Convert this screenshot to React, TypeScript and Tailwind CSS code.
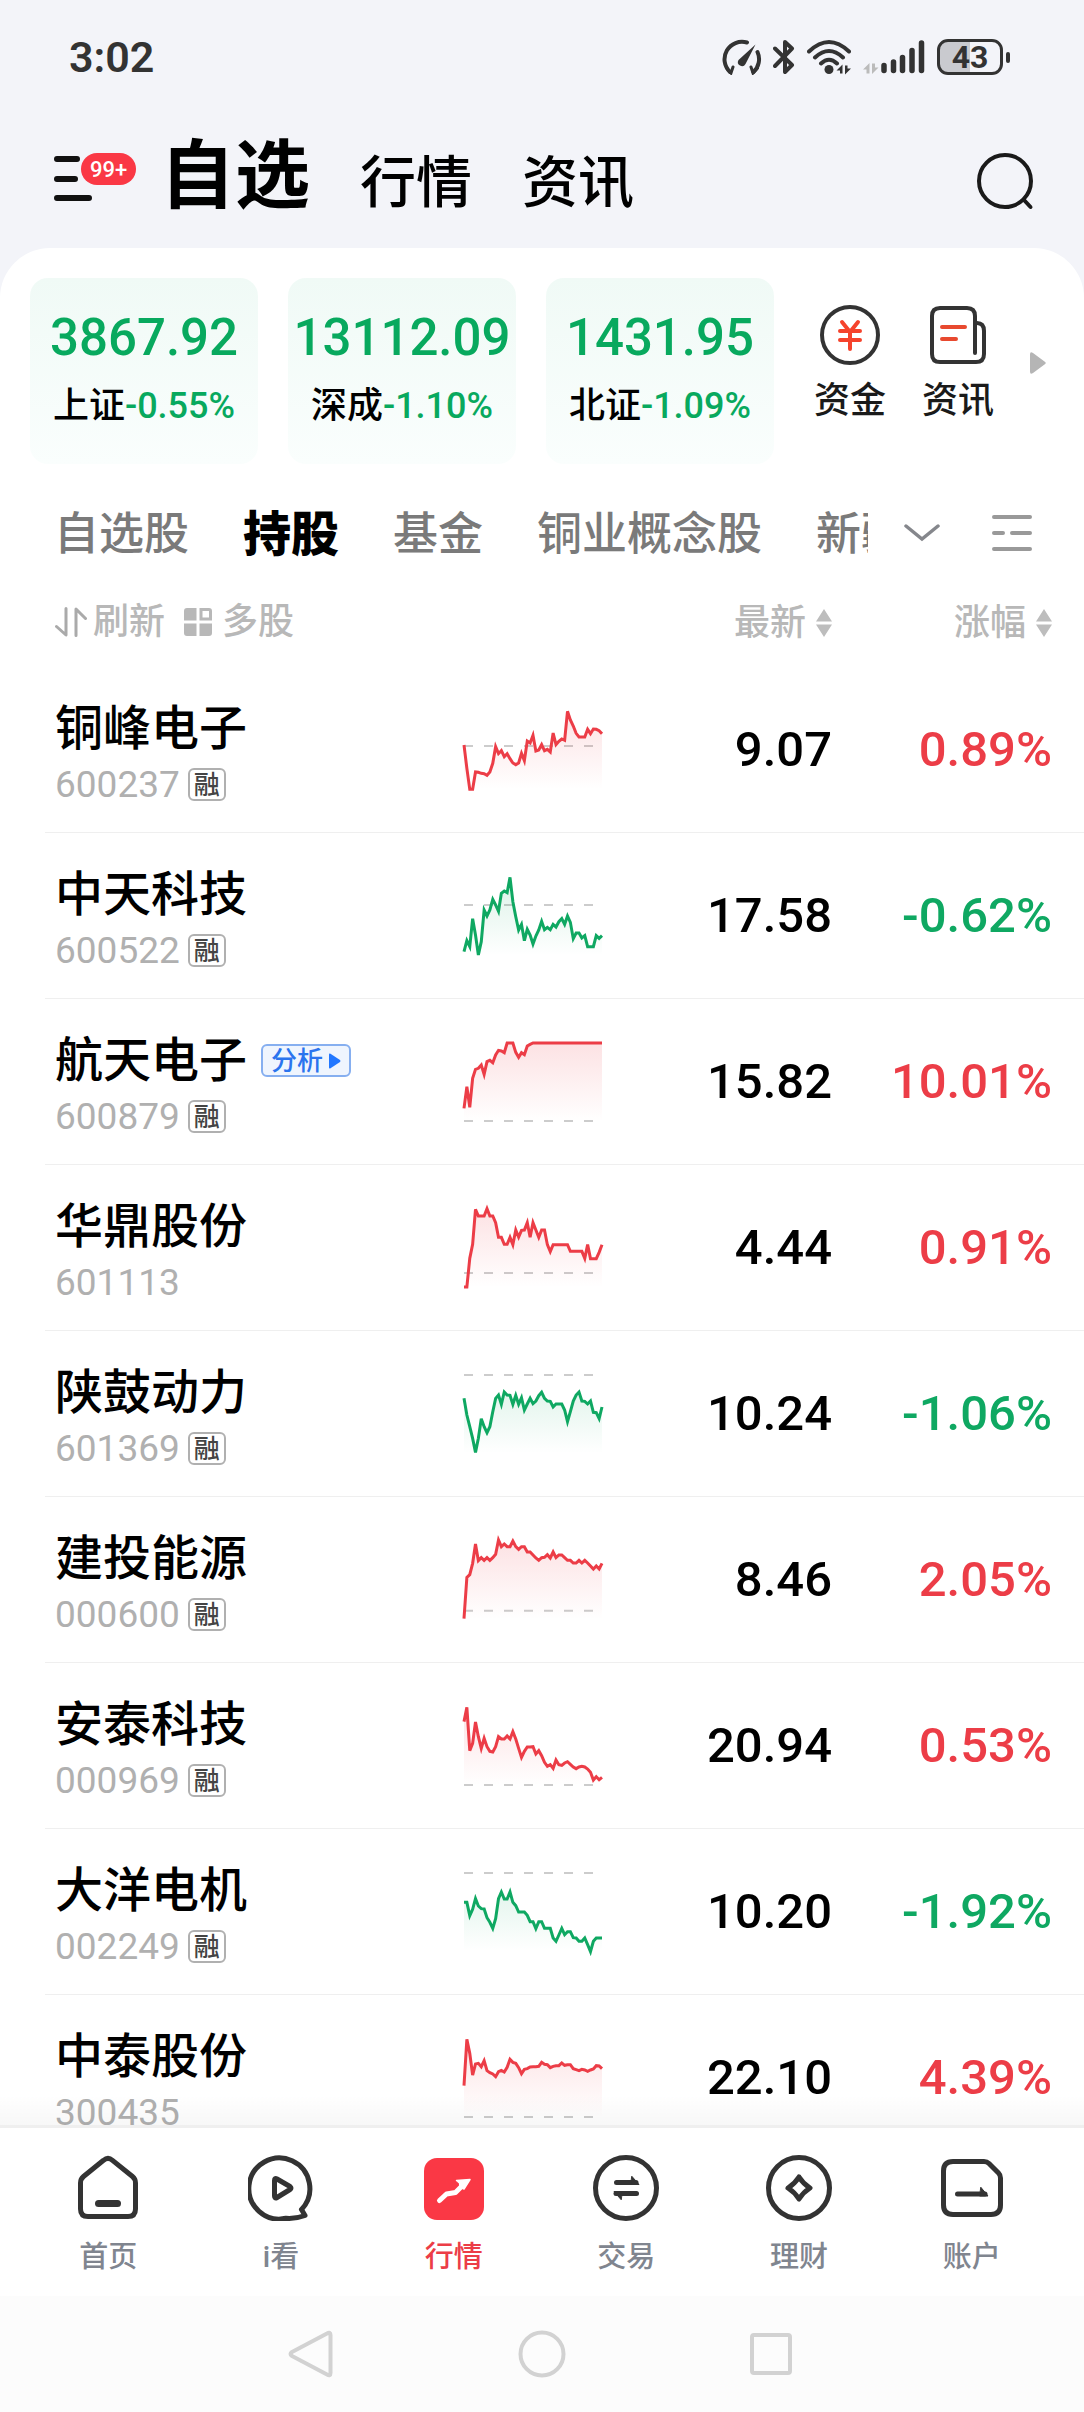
import type { ReactNode } from "react";
import clsx from "clsx";

type Stock = {
  name: string;
  code: string;
  margin?: boolean;
  analysis?: boolean;
  price: string;
  change: string;
  // y of yesterday's close, then the minute line, both on a 264 high grid
  base: number;
  trend: number[];
};

const indexes = [
  { name: "上证", value: "3867.92", change: "-0.55%" },
  { name: "深成", value: "13112.09", change: "-1.10%" },
  { name: "北证", value: "1431.95", change: "-1.09%" },
];

const groups = ["自选股", "持股", "基金", "铜业概念股", "新疆"];

const stocks: Stock[] = [
  {
    name: "铜峰电子",
    code: "600237",
    margin: true,
    price: "9.07",
    change: "0.89%",
    base: 120,
    trend: [117, 187, 250, 250, 198, 199, 202, 203, 208, 198, 172, 122, 143, 134, 152, 143, 158, 171, 176, 171, 142, 164, 105, 111, 88, 135, 132, 116, 134, 130, 138, 81, 116, 106, 99, 103, 16, 42, 60, 82, 93, 93, 93, 70, 83, 69, 70, 74, 83],
  },
  {
    name: "中天科技",
    code: "600522",
    margin: true,
    price: "17.58",
    change: "-0.62%",
    base: 99,
    trend: [239, 206, 224, 140, 189, 249, 209, 114, 132, 114, 82, 99, 118, 64, 57, 62, 16, 89, 134, 174, 157, 206, 172, 189, 216, 192, 174, 148, 173, 166, 173, 157, 165, 149, 140, 157, 132, 151, 200, 183, 183, 198, 191, 224, 224, 224, 191, 199, 191],
  },
  {
    name: "航天电子",
    code: "600879",
    margin: true,
    analysis: true,
    price: "15.82",
    change: "10.01%",
    base: 249,
    trend: [211, 146, 208, 121, 94, 91, 81, 109, 71, 67, 74, 51, 37, 39, 44, 15, 15, 15, 43, 58, 44, 50, 24, 19, 15, 15, 15, 15, 15, 15, 15, 15, 15, 15, 15, 15, 15, 15, 15, 15, 15, 15, 15, 15, 15, 15, 15, 15, 15],
  },
  {
    name: "华鼎股份",
    code: "601113",
    price: "4.44",
    change: "0.91%",
    base: 207,
    trend: [249, 249, 163, 121, 16, 36, 36, 36, 14, 36, 36, 56, 100, 100, 121, 121, 100, 122, 78, 99, 79, 78, 56, 100, 56, 78, 100, 78, 78, 122, 143, 122, 122, 122, 122, 122, 122, 142, 142, 142, 142, 142, 163, 122, 164, 164, 164, 145, 122],
  },
  {
    name: "陕鼓动力",
    code: "601369",
    margin: true,
    price: "10.24",
    change: "-1.06%",
    base: 15,
    trend: [85, 135, 170, 205, 247, 205, 146, 170, 188, 170, 125, 85, 75, 103, 66, 75, 76, 103, 76, 103, 83, 120, 102, 85, 101, 93, 77, 67, 85, 93, 94, 111, 102, 102, 102, 120, 155, 125, 93, 75, 66, 93, 94, 102, 93, 127, 128, 146, 111],
  },
  {
    name: "建投能源",
    code: "000600",
    margin: true,
    price: "8.46",
    change: "2.05%",
    base: 224,
    trend: [248, 124, 116, 82, 24, 74, 65, 73, 65, 73, 65, 55, 12, 32, 24, 32, 32, 15, 32, 40, 32, 32, 48, 48, 57, 66, 73, 65, 64, 56, 66, 48, 65, 57, 57, 65, 73, 73, 81, 81, 73, 81, 73, 81, 90, 99, 90, 99, 82],
  },
  {
    name: "安泰科技",
    code: "000969",
    margin: true,
    price: "20.94",
    change: "0.53%",
    base: 249,
    trend: [59, 16, 146, 124, 60, 104, 139, 109, 134, 148, 150, 134, 104, 111, 111, 102, 111, 89, 111, 139, 166, 148, 135, 135, 134, 156, 146, 161, 181, 193, 188, 199, 174, 188, 190, 183, 179, 187, 195, 200, 195, 193, 195, 201, 211, 234, 224, 233, 226],
  },
  {
    name: "大洋电机",
    code: "002249",
    margin: true,
    price: "10.20",
    change: "-1.92%",
    base: 15,
    trend: [103, 103, 143, 124, 92, 114, 122, 123, 149, 163, 181, 152, 92, 72, 93, 93, 72, 103, 113, 132, 132, 132, 142, 161, 161, 182, 161, 161, 181, 181, 181, 210, 220, 201, 181, 200, 191, 191, 209, 210, 220, 220, 210, 230, 251, 220, 210, 210, 210],
  },
  {
    name: "中泰股份",
    code: "300435",
    price: "22.10",
    change: "4.39%",
    base: 249,
    trend: [155, 16, 58, 123, 90, 88, 98, 80, 110, 116, 120, 128, 113, 109, 114, 100, 76, 85, 88, 101, 119, 106, 104, 99, 98, 98, 97, 85, 91, 92, 101, 97, 95, 95, 87, 94, 92, 92, 104, 107, 110, 106, 108, 112, 108, 105, 95, 96, 104],
  },
];

const navItems: { label: string; icon: ReactNode; active?: boolean }[] = [
  {
    label: "首页",
    icon: (
      <>
        <path d="M28.5 5.3Q33 1.5 37.5 5.3L57.5 21.5Q60.5 24 60.5 28V54Q60.5 61.5 53 61.5H13Q5.5 61.5 5.5 54V28Q5.5 24 8.5 21.5Z" />
        <path d="M23.5 48.5H42.5" strokeWidth="7" />
      </>
    ),
  },
  {
    label: "i看",
    icon: (
      <>
        <path d="M53.5 54.5A30.5 30.5 0 1 0 38 63.3C45 63.8 51 62.8 57 60.5L53.5 54.5" />
        <path d="M26.5 25.5Q26.5 22.5 29 24L42 31.5Q44 33 42 34.5L29 42.5Q26.5 44 26.5 41Z" />
      </>
    ),
  },
  {
    label: "行情",
    active: true,
    icon: (
      <>
        <rect x="3" y="3" width="60" height="62" rx="13" fill="#fa3845" stroke="none" />
        <path d="M18.5 45.5L25.5 39L34.5 37.5L42 30" stroke="#fff" strokeWidth="5" />
        <path d="M35.5 25.5L49 24.5L43 34L39 32L38.5 28Z" fill="#fff" stroke="#fff" strokeWidth="1.5" />
      </>
    ),
  },
  {
    label: "交易",
    icon: (
      <>
        <circle cx="33" cy="33" r="30.5" />
        <path d="M23.5 27.5H43" />
        <path d="M39 21.5L46 29.5H38Z" fill="#333" strokeWidth="1" />
        <path d="M23 38.5H43.5" />
        <path d="M28 44.5L21 36.5H29Z" fill="#333" strokeWidth="1" />
      </>
    ),
  },
  {
    label: "理财",
    icon: (
      <>
        <circle cx="33" cy="33" r="30.5" />
        <path d="M33 22Q37 28.5 44 33Q37 37.5 33 44Q29 37.5 22 33Q29 28.5 33 22Z" />
      </>
    ),
  },
  {
    label: "账户",
    icon: (
      <>
        <path d="M14 6.5H45Q48 6.5 50 8.5L59.5 18Q61.5 20 61.5 23V50Q61.5 59.5 52 59.5H14Q4.5 59.5 4.5 50V16Q4.5 6.5 14 6.5Z" />
        <path d="M18.5 39H46" />
        <path d="M42 32.5L49 41H41Z" fill="#333" strokeWidth="1" />
      </>
    ),
  },
];

const StatusBar = () => (
  <div className="flex h-[114px] shrink-0 items-center justify-between pl-[69px] pr-[74px] text-[#333]">
    <span className="text-[43px] font-semibold leading-none">3:02</span>
    <div className="flex items-center">
      {/* Speed */}
      <svg viewBox="0 0 40 36" className="h-9 w-10" fill="none" stroke="currentColor" strokeWidth="4" strokeLinecap="round">
        <path d="M8 33A17.5 17.5 0 0 1 25 3.5M35.5 13A17.5 17.5 0 0 1 31.5 33" />
        <path d="M4.5 29L9 34L11 28M35.5 29L31 34L29 28" strokeWidth="3" />
        <path d="M33.5 5.5L23.5 25A4 4 0 1 1 16.5 21Z" fill="currentColor" stroke="none" />
      </svg>
      {/* Bluetooth */}
      <svg viewBox="0 0 22 36" className="ml-[11px] h-9 w-[22px]" fill="none" stroke="currentColor" strokeWidth="4" strokeLinecap="round" strokeLinejoin="round">
        <path d="M2 9.5L19 26L12 33V3L19 9.5L2 27" />
      </svg>
      {/* Wifi */}
      <svg viewBox="0 0 44 36" className="ml-3 h-9 w-11" fill="none" stroke="currentColor" strokeWidth="4" strokeLinecap="round">
        <path d="M2 12.5Q22 -6.5 42 12.5M8 18.5Q22 5.5 36 18.5M14 24.5Q22 17 30 24.5" />
        <circle cx="22" cy="30.5" r="4.5" fill="currentColor" stroke="none" />
        <path d="M29.5 31.5L35.5 25.5V34.5H33V31.5ZM44 29.5L38 35.5V26.5H40.5V29.5Z" fill="currentColor" stroke="none" />
      </svg>
      {/* Signal */}
      <svg viewBox="0 0 62 36" className="ml-3 h-9 w-[62px]" fill="none" strokeLinecap="round">
        <path d="M0 30.5L6.5 24V34.5H3.5V30.5ZM15.500 28.5L9 35V24.5H12V28.5Z" fill="#bbb" />
        <path d="M21 26.5V31.5M30.5 23V31.5M39.5 18.5V31.5M49 11.5V31.5M58.5 4V31.5" stroke="currentColor" strokeWidth="5.5" />
      </svg>
      {/* Battery */}
      <div className="ml-3 flex h-9 w-[66px] items-center justify-center rounded-[11px] border-3 border-[#333] bg-linear-to-r from-[#c9cacf] from-50% to-transparent to-50%">
        <span className="text-[32px] font-bold leading-none">43</span>
      </div>
      <span className="ml-[3px] h-[11px] w-1 rounded-full bg-[#333]" />
    </div>
  </div>
);

const Header = () => (
  <header className="flex h-[134px] shrink-0 items-center pb-1 pl-[54px] pr-[50px]">
    <button aria-label="菜单" className="relative h-[50px] w-[82px]">
      <svg viewBox="0 0 82 50" className="h-full w-full" stroke="#111" strokeWidth="6" strokeLinecap="round">
        <path d="M3 5H23M3 25H21M3 44H35" />
      </svg>
      <span className="absolute -top-px right-0 flex h-8 w-[55px] items-center justify-center rounded-full bg-[#fa3845] text-[22px] font-medium text-white">
        99+
      </span>
    </button>
    <nav className="ml-6 flex items-baseline gap-[50px] text-[56px] font-medium leading-[90px] text-black">
      <a href="#watch" className="text-[75px] font-bold">自选</a>
      <a href="#market">行情</a>
      <a href="#news">资讯</a>
    </nav>
    <button aria-label="搜索" className="ml-auto pt-1">
      <svg viewBox="0 0 58 58" className="h-[58px] w-[58px]" fill="none" stroke="#1a1a1a" strokeWidth="4" strokeLinecap="round">
        <circle cx="29" cy="29" r="26" />
        <path d="M48 48L54.5 55" />
      </svg>
    </button>
  </header>
);

const MarketStrip = () => (
  <section className="flex items-center pb-[25px] pl-[30px] pr-[38px] pt-[30px]">
    <div className="flex flex-1 gap-[30px]">
      {indexes.map((item) => (
        <button
          key={item.name}
          className="flex h-[186px] min-w-0 flex-1 flex-col items-center rounded-[18px] bg-linear-to-b from-[#f0faf6] to-[#fafefd] pt-8"
        >
          <span className="text-[51px] font-medium leading-[56px] text-[#08a95e]">{item.value}</span>
          <span className="mt-5 whitespace-nowrap text-[36px] font-medium leading-10 text-black">
            {item.name}
            <span className="text-[#08a95e]">{item.change}</span>
          </span>
        </button>
      ))}
    </div>
    <div className="ml-10 flex items-center gap-9 pb-4 text-[36px] font-medium leading-10 text-[#1a1a1a]">
      <button className="flex flex-col items-center gap-4">
        <svg viewBox="0 0 60 60" className="h-[60px] w-[60px]" fill="none" strokeLinecap="round">
          <circle cx="30" cy="30" r="28" stroke="#333" strokeWidth="4" />
          <path d="M22 17L30 27L38 17M20 26H40M20 35H40M30 27V44" stroke="#f5432c" strokeWidth="4" />
        </svg>
        资金
      </button>
      <button className="flex flex-col items-center gap-4">
        <svg viewBox="0 0 60 60" className="h-[60px] w-[60px]" fill="none" strokeLinecap="round" strokeWidth="4">
          <path d="M47 48V11Q47 3 39 3H12Q4 3 4 11V49Q4 57 12 57H48Q56 57 56 49V26Q56 18 49 18" stroke="#333" />
          <path d="M14 22H37M14 34H28" stroke="#e8492f" />
        </svg>
        资讯
      </button>
      <button aria-label="更多">
        <svg viewBox="0 0 16 22" className="h-[22px] w-4" fill="#b5b5b5">
          <path d="M0 2.5Q0 -1 3 1L14.5 9.5Q17 11 14.5 12.5L3 21Q0 23 0 19.5Z" />
        </svg>
      </button>
    </div>
  </section>
);

const GroupTabs = () => (
  <div className="flex h-[88px] items-center pl-[54px] pr-[52px]">
    <div className="flex min-w-0 flex-1 items-center gap-[54px] overflow-hidden whitespace-nowrap pt-1 text-[45px] font-medium leading-[60px] text-[#7a7a7a]">
      {groups.map((group) => (
        <button key={group} className={clsx("shrink-0", group === "持股" && "text-[48px] font-black text-black")}>
          {group}
        </button>
      ))}
    </div>
    <button aria-label="展开分组" className="ml-9">
      <svg viewBox="0 0 36 18" className="h-[18px] w-9" fill="none" stroke="#85878c" strokeWidth="3.5" strokeLinecap="round">
        <path d="M2 2L18 15L34 2" />
      </svg>
    </button>
    <button aria-label="管理分组" className="ml-[52px]">
      <svg viewBox="0 0 40 36" className="h-9 w-10" stroke="#999" strokeWidth="4" strokeLinecap="round">
        <path d="M2 2H38M2 18H11M20 18H38M2 34H38" />
      </svg>
    </button>
  </div>
);

const SortButton = ({ label }: { label: string }) => (
  <button className="inline-flex items-center gap-[10px] align-middle">
    {label}
    <svg viewBox="0 0 16 28" className="h-7 w-4" fill="#bdbdbd">
      <path d="M8 0L16 12.5H0ZM8 28L16 15.5H0Z" />
    </svg>
  </button>
);

const Sparkline = ({ stock, up }: { stock: Stock; up: boolean }) => {
  const color = up ? "#ec3d47" : "#0fa862";
  const step = 414 / (stock.trend.length - 1);
  const line = stock.trend.map((y, i) => `${(i * step).toFixed(1)},${y}`).join(" ");
  const fill = `fill-${stock.code}`;

  return (
    <svg viewBox="0 0 414 264" className="block h-[88px] w-[138px] overflow-visible" fill="none">
      <defs>
        <linearGradient id={fill} x1="0" y1="0" x2="0" y2="250" gradientUnits="userSpaceOnUse">
          <stop offset="0" stopColor={color} stopOpacity="0.16" />
          <stop offset="1" stopColor={color} stopOpacity="0" />
        </linearGradient>
      </defs>
      <path d={`M0 ${stock.base}H414`} stroke="#ccc" strokeWidth="6" strokeDasharray="27 33" />
      <polygon points={`0,250 ${line} 414,250`} fill={`url(#${fill})`} />
      <polyline points={line} stroke={color} strokeWidth="9" />
    </svg>
  );
};

const StockRow = ({ stock }: { stock: Stock }) => {
  const up = !stock.change.startsWith("-");

  return (
    <tr className="*:h-[166px] *:border-b *:border-[#efefef] *:p-0">
      <td>
        <div className="pl-[10px] pt-[6px]">
          <div className="flex items-center gap-[14px]">
            <span className="text-[48px] font-medium leading-[56px] text-black">{stock.name}</span>
            {stock.analysis && (
              <button className="flex h-[33px] items-center gap-[6px] rounded-md border-2 border-[#86aff0] bg-[#eff5fe] px-2 text-[26px] font-medium leading-none text-[#2b74ee]">
                分析
                <svg viewBox="0 0 12 16" className="h-4 w-3" fill="#2277ff">
                  <path d="M0 1.5Q0 0 1.5 .7L11 7Q12 8 11 9L1.5 15.3Q0 16 0 14.5Z" />
                </svg>
              </button>
            )}
          </div>
          <div className="mt-2 flex items-center gap-2">
            <span className="text-[37px] leading-10 text-[#b0b0b0]">{stock.code}</span>
            {stock.margin && (
              <span className="flex h-[33px] w-[38px] items-center justify-center rounded-md border-2 border-[#b0b0b0] text-[26px] font-medium leading-none text-[#444]">
                融
              </span>
            )}
          </div>
        </div>
      </td>
      <td>
        <Sparkline stock={stock} up={up} />
      </td>
      <td className="text-right text-[49px] font-medium text-black">{stock.price}</td>
      <td className={clsx("text-right text-[49px] font-medium", up ? "text-[#ec3d47]" : "text-[#0fa862]")}>
        <div className="pr-8">{stock.change}</div>
      </td>
    </tr>
  );
};

const StockTable = () => (
  <div className="pl-[45px]">
    <table className="w-full table-fixed border-separate border-spacing-0">
      <thead>
        <tr className="h-[90px] text-[36px] leading-10 text-[#b8b8b8] *:p-0 *:font-medium">
          <th className="text-left">
            <div className="flex items-center pl-[10px]">
              <button className="flex items-center gap-[6px]">
                <svg viewBox="0 0 32 30" className="h-[30px] w-8" fill="none" stroke="#aaa" strokeWidth="3" strokeLinecap="round" strokeLinejoin="round">
                  <path d="M1.5 19.5L11 28V1.5M21 28.5V2L30.5 11.5" />
                </svg>
                刷新
              </button>
              <button className="ml-[19px] flex items-center gap-[10px]">
                <svg viewBox="0 0 28 28" className="h-7 w-7" fill="#b8b8b8">
                  <path d="M3 0H12.5V12.5H0V3Q0 0 3 0ZM0 15.5H12.5V28H3Q0 28 0 25ZM15.5 15.5H28V25Q28 28 25 28H15.5Z" />
                  <path d="M17 1.5H25Q26.5 1.5 26.5 3V11H17Z" fill="none" stroke="#b8b8b8" strokeWidth="3" />
                </svg>
                多股
              </button>
            </div>
          </th>
          <th className="w-[138px]" aria-label="分时" />
          <th className="w-[230px] text-right">
            <SortButton label="最新" />
          </th>
          <th className="w-[252px] text-right">
            <div className="pr-8">
              <SortButton label="涨幅" />
            </div>
          </th>
        </tr>
      </thead>
      <tbody>
        {stocks.map((stock) => (
          <StockRow key={stock.code} stock={stock} />
        ))}
      </tbody>
    </table>
  </div>
);

const BottomNav = () => (
  <nav className="relative flex shrink-0 border-t-3 border-[#efefef] bg-white pb-[19px] pl-[22px] pr-[26px] pt-[27px]">
    <div className="absolute inset-x-0 -top-[33px] h-[30px] bg-linear-to-b from-transparent to-black/3" />
    {navItems.map((item) => (
      <button key={item.label} className="flex flex-1 flex-col items-center gap-4">
        <svg viewBox="0 0 66 66" className="h-[66px] w-[66px]" fill="none" stroke="#333" strokeWidth="5" strokeLinecap="round" strokeLinejoin="round">
          {item.icon}
        </svg>
        <span className={clsx("text-[29px] font-medium leading-10", item.active ? "text-[#ec3d47]" : "text-[#80858f]")}>
          {item.label}
        </span>
      </button>
    ))}
  </nav>
);

const SystemNav = () => (
  <div className="flex h-[116px] shrink-0 items-center justify-center gap-[182px] bg-[#fcfcfc]">
    {[
      { label: "返回", shape: <path d="M39 3.5Q42.500 1.5 42.5 5V43Q42.5 46.5 39 44.5L4 26Q1 24 4 22Z" /> },
      { label: "主屏幕", shape: <circle cx="24" cy="24" r="21.5" /> },
      { label: "最近任务", shape: <rect x="4" y="5" width="38" height="38" rx="2" /> },
    ].map(({ label, shape }) => (
      <button key={label} aria-label={label}>
        <svg viewBox="0 0 48 48" className="h-12 w-12" fill="none" stroke="#d2d2d2" strokeWidth="4" strokeLinejoin="round">
          {shape}
        </svg>
      </button>
    ))}
  </div>
);

export default function App() {
  return (
    <div className="flex h-screen flex-col overflow-hidden bg-[#f3f4f9] font-['Roboto','Noto_Sans_CJK_SC',sans-serif]">
      <StatusBar />
      <Header />
      <main className="min-h-0 flex-1 overflow-hidden rounded-t-[50px] bg-white">
        <MarketStrip />
        <GroupTabs />
        <StockTable />
      </main>
      <BottomNav />
      <SystemNav />
    </div>
  );
}
